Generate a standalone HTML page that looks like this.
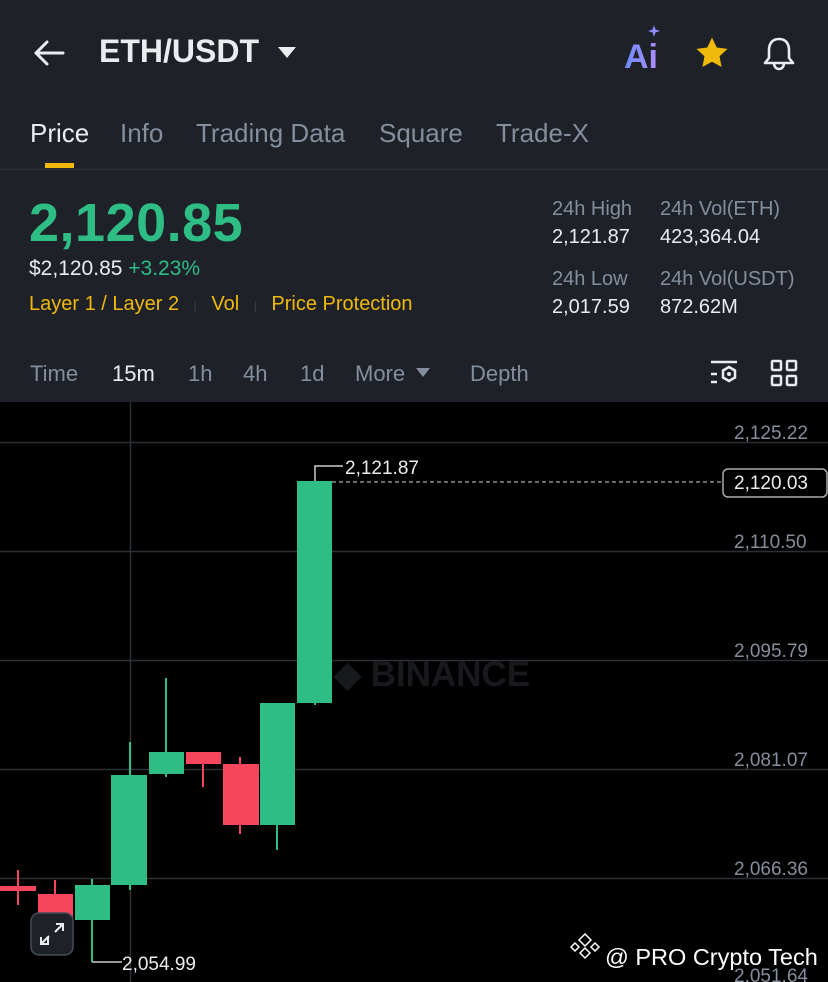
<!DOCTYPE html>
<html><head><meta charset="utf-8"><style>
body{margin:0;width:828px;height:982px;overflow:hidden;background:#000;font-family:"Liberation Sans",sans-serif;position:relative}
.hd{position:absolute;left:0;top:0;width:828px;height:402px;background:#1e2128}
.t{position:absolute;white-space:nowrap}
</style></head><body>
<div class="hd"></div>
<svg class="t" style="left:32px;top:38px" width="34" height="30" viewBox="0 0 34 30"><path d="M4 15H31M15 4L4 15L15 26" fill="none" stroke="#eaecef" stroke-width="3" stroke-linecap="round" stroke-linejoin="round"/></svg>
<div class="t" style="left:99px;top:33px;font-size:32px;font-weight:bold;color:#eaecef">ETH/USDT</div>
<svg class="t" style="left:277px;top:46px" width="20" height="14"><path d="M1 1H19L10 12Z" fill="#eaecef"/></svg>
<svg class="t" style="left:620px;top:24px" width="50" height="50"><defs><linearGradient id="g" x1="0" x2="1"><stop offset="0" stop-color="#6a8cff"/><stop offset="1" stop-color="#b08cff"/></linearGradient></defs><text x="4" y="44" font-family="Liberation Sans" font-weight="bold" font-size="34" fill="url(#g)">Ai</text><path d="M34 1L35.5 5.5L40 7L35.5 8.5L34 13L32.5 8.5L28 7L32.5 5.5Z" fill="#8c8cff"/></svg>
<svg class="t" style="left:694px;top:36px" width="36" height="34" viewBox="0 0 24 23"><path d="M12 1l3.2 6.8 7.3.9-5.4 5 1.4 7.3L12 17.4 5.5 21l1.4-7.3-5.4-5 7.3-.9z" fill="#f0b90b"/></svg>
<svg class="t" style="left:762px;top:36px" width="34" height="36" viewBox="0 0 34 36"><path d="M17 3C10 3 7 8 7 14v8l-4 5h28l-4-5v-8c0-6-3-11-10-11zM12 27c0 4 2.5 6 5 6s5-2 5-6" fill="none" stroke="#eaecef" stroke-width="2.6" stroke-linejoin="round"/></svg>
<div class="t" style="left:30px;top:118px;font-size:26px;color:#eaecef">Price</div>
<div class="t" style="left:120px;top:118px;font-size:26px;color:#848e9c">Info</div>
<div class="t" style="left:196px;top:118px;font-size:26px;color:#848e9c">Trading Data</div>
<div class="t" style="left:379px;top:118px;font-size:26px;color:#848e9c">Square</div>
<div class="t" style="left:496px;top:118px;font-size:26px;color:#848e9c">Trade-X</div>
<div class="t" style="left:45px;top:163px;width:29px;height:5px;background:#f0b90b"></div>
<div class="t" style="left:0;top:169px;width:828px;height:1px;background:#2b2f36"></div>
<div class="t" style="left:29px;top:192px;font-size:54px;font-weight:bold;color:#2ebd85;letter-spacing:0.5px">2,120.85</div>
<div class="t" style="left:29px;top:257px;font-size:21px;color:#eaecef">$2,120.85 <span style="color:#2ebd85">+3.23%</span></div>
<div class="t" style="left:29px;top:293px;font-size:20px;color:#f0b90b">Layer 1 / Layer 2 <span style="color:#3a3f47;margin:0 9px;font-size:12px">|</span> Vol <span style="color:#3a3f47;margin:0 9px;font-size:12px">|</span> Price Protection</div>
<div class="t" style="left:552px;top:195px;font-size:20px;color:#848e9c;line-height:28px">24h High<br><span style="color:#eaecef">2,121.87</span></div>
<div class="t" style="left:660px;top:195px;font-size:20px;color:#848e9c;line-height:28px">24h Vol(ETH)<br><span style="color:#eaecef">423,364.04</span></div>
<div class="t" style="left:552px;top:265px;font-size:20px;color:#848e9c;line-height:28px">24h Low<br><span style="color:#eaecef">2,017.59</span></div>
<div class="t" style="left:660px;top:265px;font-size:20px;color:#848e9c;line-height:28px">24h Vol(USDT)<br><span style="color:#eaecef">872.62M</span></div>
<div class="t" style="left:30px;top:361px;font-size:22px;color:#848e9c">Time</div>
<div class="t" style="left:112px;top:361px;font-size:22px;color:#eaecef">15m</div>
<div class="t" style="left:188px;top:361px;font-size:22px;color:#848e9c">1h</div>
<div class="t" style="left:243px;top:361px;font-size:22px;color:#848e9c">4h</div>
<div class="t" style="left:300px;top:361px;font-size:22px;color:#848e9c">1d</div>
<div class="t" style="left:355px;top:361px;font-size:22px;color:#848e9c">More</div>
<svg class="t" style="left:416px;top:368px" width="14" height="10"><path d="M0 0H14L7 9Z" fill="#848e9c"/></svg>
<div class="t" style="left:470px;top:361px;font-size:22px;color:#848e9c">Depth</div>
<svg class="t" style="left:708px;top:358px" width="32" height="30" viewBox="0 0 32 30"><path d="M3 4H29M3 16H9M3 24H9" stroke="#eaecef" stroke-width="2.5"/><path d="M21 9l6 3.5v7L21 23l-6-3.5v-7z" fill="none" stroke="#eaecef" stroke-width="2.5"/><circle cx="21" cy="16" r="2" fill="#eaecef"/></svg>
<svg class="t" style="left:770px;top:359px" width="28" height="28" viewBox="0 0 28 28"><g fill="none" stroke="#eaecef" stroke-width="2.5"><rect x="2" y="2" width="9" height="9" rx="1"/><rect x="17" y="2" width="9" height="9" rx="1"/><rect x="2" y="17" width="9" height="9" rx="1"/><rect x="17" y="17" width="9" height="9" rx="1"/></g></svg>

<svg class="t" style="left:0;top:0" width="828" height="982">
<g stroke="#2b2f36" stroke-width="1.5"><path d="M0 442.5H828M0 551.5H828M0 660.5H828M0 769.5H828M0 878.5H828M130.5 402V982"/></g>
<text x="334" y="686" font-family="Liberation Sans" font-weight="bold" font-size="35" fill="#17191d">◆ BINANCE</text>
<path d="M332 482H722" stroke="#aaa" stroke-dasharray="4 3" stroke-width="1.2"/>
<g fill="#f6465d" stroke="#f6465d" stroke-width="2">
<path d="M18 870V905M55 880V915M203 764V787M240 757V834" fill="none"/>
<rect x="0" y="886" width="36" height="5" stroke="none"/>
<rect x="38" y="894" width="35" height="24" stroke="none"/>
<rect x="186" y="752" width="35" height="12" stroke="none"/>
<rect x="223" y="764" width="36" height="61" stroke="none"/>
</g>
<g fill="#2ebd85" stroke="#2ebd85" stroke-width="2">
<path d="M92 879V962M130 742V890M166 678V777M277 825V850M315 700V705" fill="none"/>
<rect x="75" y="885" width="35" height="35" stroke="none"/>
<rect x="111" y="775" width="36" height="110" stroke="none"/>
<rect x="149" y="752" width="35" height="22" stroke="none"/>
<rect x="260" y="703" width="35" height="122" stroke="none"/>
<rect x="297" y="481" width="35" height="222" stroke="none"/>
</g>
<path d="M315 481V466H343M92 962H122" fill="none" stroke="#ccc" stroke-width="1.5"/>
<g font-family="Liberation Sans" font-size="19" fill="#eaecef">
<text x="345" y="474">2,121.87</text>
<text x="122" y="970">2,054.99</text>
</g>
<g font-family="Liberation Sans" font-size="19" fill="#848e9c">
<text x="734" y="439">2,125.22</text>
<text x="734" y="548">2,110.50</text>
<text x="734" y="657">2,095.79</text>
<text x="734" y="766">2,081.07</text>
<text x="734" y="875">2,066.36</text>
<text x="734" y="982">2,051.64</text>
</g>
<rect x="723" y="469" width="104" height="28" rx="5" fill="#000" stroke="#aaa" stroke-width="1.5"/>
<text x="734" y="489" font-family="Liberation Sans" font-size="19" fill="#eaecef">2,120.03</text>
<rect x="31" y="913" width="42" height="42" rx="8" fill="#1e2128" stroke="#474d57" stroke-width="1.5"/>
<path d="M56 924H63V931M63 924L55 932M48 937V944H41V937M41 944L49 936" fill="none" stroke="#eaecef" stroke-width="2"/>
<path d="M585 944l6 6-6 6-6-6zM585 958l5 5-5 5-5-5zM575 953l4 4-4 4-4-4zM595 953l4 4-4 4-4-4z" fill="none" stroke="#fff" stroke-width="1.5" transform="translate(0,-10)"/>
<text x="605" y="965" font-family="Liberation Sans" font-size="23.5" fill="#fff">@ PRO Crypto Tech</text>
</svg>
</body></html>
